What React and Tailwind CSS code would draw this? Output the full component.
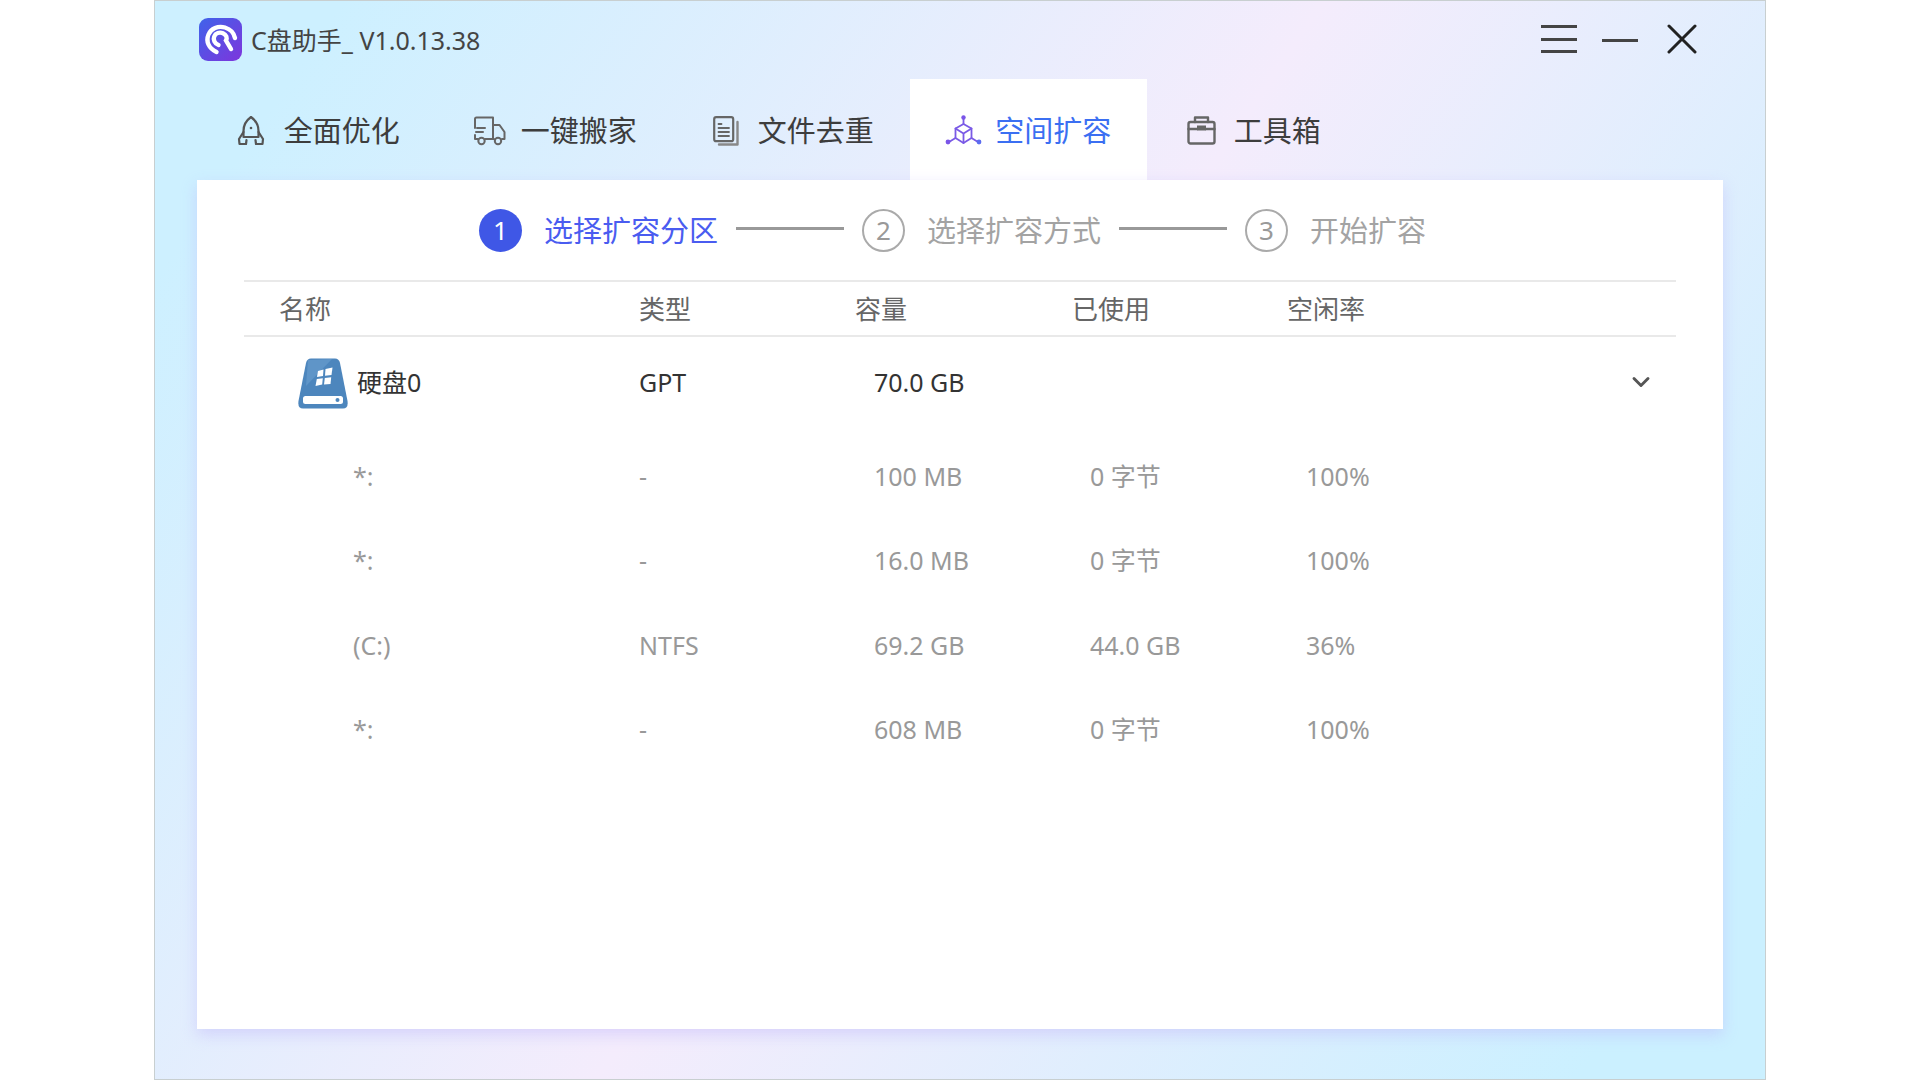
import { ChevronDown } from 'lucide-react';

const FONT = "font-['Noto_Sans','Noto_Sans_CJK_SC',sans-serif]";

const LogoIcon = () => (
  <svg width="43" height="43" viewBox="0 0 43 43" className="shrink-0">
    <defs>
      <linearGradient id="logoBg" x1="0" y1="0" x2="1" y2="1">
        <stop offset="0" stopColor="#3f63ea" />
        <stop offset="1" stopColor="#7e35dc" />
      </linearGradient>
    </defs>
    <rect width="43" height="43" rx="9" fill="url(#logoBg)" />
    <g fill="none" stroke="#fff" strokeLinecap="round">
      <path d="M17.500 34 C10 30.500 6.500 23.500 9.500 16.500 C12 10.500 19 7.500 26 9.500 C31.500 11.200 35 15 36 20" strokeWidth="4.400" />
      <path d="M19.500 27 C15.500 25.500 14 21.500 15.200 18.500 C16.500 15 20.500 13.800 24 15.200 C27.500 16.800 28.500 20 27 22.500 L32 31" strokeWidth="4.400" />
    </g>
  </svg>
);

const RocketIcon = () => (
  <svg width="28" height="32" viewBox="0 0 28 32" fill="none" stroke="#555" strokeWidth="2.200" strokeLinejoin="round" strokeLinecap="round" className="shrink-0">
    <path d="M14 2 C8.500 6 6.500 11 6.500 16 L6.500 22 L21.500 22 L21.500 16 C21.500 11 19.500 6 14 2 Z" />
    <path d="M6.500 17 L2 24 L2.500 29 L9 29 L9.500 25" />
    <path d="M21.500 17 L26 24 L25.500 29 L19 29 L18.500 25" />
    <circle cx="14" cy="13" r="1.300" fill="#555" stroke="none" />
  </svg>
);

const TruckIcon = () => (
  <svg width="33" height="30" viewBox="0 0 33 30" fill="none" stroke="#666" strokeWidth="2" strokeLinejoin="round" strokeLinecap="round" className="shrink-0">
    <path d="M2 12 L2 3 Q2 1.500 3.500 1.500 L20 1.500 L20 23" />
    <path d="M20 9 L26.500 9 L31.500 16 L31.500 23 L29 23" />
    <path d="M2 19 L2 23 L5 23" />
    <path d="M12 23 L21 23" />
    <path d="M4 12 L12 12 M3 16 L10 16" />
    <circle cx="8.500" cy="25" r="3.200" />
    <circle cx="25" cy="25" r="3.200" />
  </svg>
);

const DocIcon = () => (
  <svg width="26" height="30" viewBox="0 0 26 30" fill="none" strokeLinejoin="round" strokeLinecap="round" className="shrink-0">
    <path d="M6 28.500 L24.500 28.500 L24.500 6" stroke="#888" strokeWidth="2.400" />
    <rect x="1.200" y="1.200" width="19" height="24" rx="2" stroke="#666" strokeWidth="2.200" />
    <path d="M5.500 8 L8.500 8 M5.500 12 L16 12 M5.500 16 L16 16 M5.500 20 L16 20" stroke="#666" strokeWidth="1.800" />
  </svg>
);

const CubeIcon = () => (
  <svg width="37" height="31" viewBox="0 0 37 31" fill="none" strokeLinejoin="round" strokeLinecap="round" className="shrink-0">
    <g stroke="#7a5ae6" strokeWidth="1.800">
      <path d="M18.500 9 L26.500 13.500 L26.500 23 L18.500 28 L10.500 23 L10.500 13.500 Z" />
      <path d="M10.500 13.500 L18.500 18.500 L26.500 13.500 M18.500 18.500 L18.500 28" />
      <path d="M18.500 3 L18.500 9 M10.500 23 L4 27 M26.500 23 L33 27" />
    </g>
    <circle cx="18.500" cy="2.500" r="2.200" fill="#7a55e8" />
    <circle cx="3" cy="27" r="2.400" fill="#7a55e8" />
    <circle cx="34" cy="27" r="2.400" fill="#5b6cf0" />
  </svg>
);

const ToolboxIcon = () => (
  <svg width="29" height="29" viewBox="0 0 29 29" fill="none" stroke="#666" strokeWidth="2.400" strokeLinejoin="round" strokeLinecap="round" className="shrink-0">
    <rect x="1.500" y="6" width="26" height="21.500" rx="2" />
    <path d="M8 6 L8 1.500 L21 1.500 L21 6" />
    <path d="M1.500 13 L10 13 M19 13 L27.500 13" />
    <rect x="10" y="9.500" width="9" height="5" fill="#666" stroke="none" />
  </svg>
);

const DiskIcon = () => (
  <svg width="50" height="51" viewBox="0 0 50 51" className="shrink-0">
    <path d="M8 5 Q9 0.500 13 0.500 L37 0.500 Q41 0.500 42 5 L49.500 43 Q50.500 50.500 45 50.500 L5 50.500 Q-0.500 50.500 0.500 43 Z" fill="#4d86bd" />
    <path d="M10 2 L34 1 L8 28 Z" fill="#5f95c8" />
    <g fill="#fff" transform="translate(1 3.500)">
      <path d="M19 9.500 L24.500 8 L24 14.500 L18 15.500 Z" />
      <path d="M26.500 7.500 L33.500 6 L32.500 13.500 L26 14.200 Z" />
      <path d="M17.800 17.500 L23.800 16.800 L23.200 23 L16.500 24.500 Z" />
      <path d="M25.800 16.500 L32.200 15.800 L31.500 22.500 L25 23 Z" />
    </g>
    <rect x="5" y="38" width="40" height="8" rx="2.500" fill="#fff" />
    <circle cx="39.500" cy="42" r="2" fill="#4d86bd" />
  </svg>
);

const tabs = [
  { label: '全面优化', icon: <RocketIcon />, cls: 'gap-[19px] pl-[5px]' },
  { label: '一键搬家', icon: <TruckIcon />, cls: 'gap-[15px] pl-[3px]' },
  { label: '文件去重', icon: <DocIcon />, cls: 'gap-[19px] pl-[5px]' },
  { label: '空间扩容', icon: <CubeIcon />, cls: 'gap-[13px]', active: true },
  { label: '工具箱', icon: <ToolboxIcon />, cls: 'gap-[18px] pr-[24px]' },
];

const partitions = [
  { name: '*:', type: '-', size: '100 MB', used: '0 字节', free: '100%' },
  { name: '*:', type: '-', size: '16.0 MB', used: '0 字节', free: '100%' },
  { name: '(C:)', type: 'NTFS', size: '69.2 GB', used: '44.0 GB', free: '36%' },
  { name: '*:', type: '-', size: '608 MB', used: '0 字节', free: '100%' },
];

const COLS = 'grid grid-cols-[395px_216px_217px_215px_1fr] items-center';

function Step({ n, label, active }) {
  return (
    <div className="flex items-center gap-[22px]">
      <div
        className={
          active
            ? 'flex h-[43px] w-[43px] items-center justify-center rounded-full bg-[#3f57e6] text-[26px] text-white'
            : 'flex h-[43px] w-[43px] items-center justify-center rounded-full border-2 border-[#aaa] text-[26px] text-[#999]'
        }
      >
        {n}
      </div>
      <span className={active ? 'mt-[2px] text-[29px] text-[#4a5cf0]' : 'mt-[2px] text-[29px] text-[#a3a3a3]'}>{label}</span>
    </div>
  );
}

const StepLine = () => <div className="mx-[18px] mb-[4px] h-[3px] w-[108px] bg-[#999]" />;

export default function App() {
  return (
    <div className={`h-[1080px] w-[1920px] overflow-hidden bg-white ${FONT}`}>
      <div className="mx-auto flex h-[1080px] w-[1612px] flex-col border border-[#c8cfd0] bg-[linear-gradient(124deg,#cdf0ff_8%,#f4ecfc_50%,#cbf0ff_92%)]">
        {/* title bar */}
        <div className="flex h-[78px] items-start justify-between pl-[44px] pr-[68px]">
          <div className="mt-[17px] flex items-center gap-[9px]">
            <LogoIcon />
            <span className="mt-[3px] text-[25px] text-[#444]">C盘助手_ V1.0.13.38</span>
          </div>
          <div className="mt-[23px] flex items-center gap-[25px]">
            <div className="flex h-[30px] w-[36px] flex-col justify-between py-[1px]">
              <div className="h-[3px] bg-[#444]" />
              <div className="h-[3px] bg-[#444]" />
              <div className="h-[3px] bg-[#444]" />
            </div>
            <div className="mt-[2px] h-[3px] w-[36px] bg-[#444]" />
            <svg width="30" height="30" viewBox="0 0 30 30" stroke="#222" strokeWidth="3" strokeLinecap="round" className="ml-[4px]">
              <path d="M2 2 L28 28 M28 2 L2 28" />
            </svg>
          </div>
        </div>

        {/* tabs */}
        <div className="flex h-[101px] pl-[42px]">
          {tabs.map((t) => (
            <div
              key={t.label}
              className={`flex h-full w-[237.5px] items-center justify-center pt-[2px] ${t.cls} ${t.active ? 'bg-white text-[#3b6ff2]' : 'text-[#3d3d3d]'}`}
            >
              {t.icon}
              <span className="text-[29px]">{t.label}</span>
            </div>
          ))}
        </div>

        {/* content */}
        <div className="ml-[42px] h-[849px] w-[1526px] bg-white shadow-[0_6px_14px_rgba(190,180,250,0.45)]">
          <div className="flex h-[100px] items-center pl-[282px]">
            <Step n="1" label="选择扩容分区" active />
            <StepLine />
            <Step n="2" label="选择扩容方式" />
            <StepLine />
            <Step n="3" label="开始扩容" />
          </div>

          <div className="mx-[47px]">
            <div className={`${COLS} h-[57px] border-y-2 border-[#e9e9e9] pt-[2px] text-[26px] text-[#666]`}>
              <span className="pl-[35px]">名称</span>
              <span>类型</span>
              <span>容量</span>
              <span>已使用</span>
              <span>空闲率</span>
            </div>

            <div className={`${COLS} relative mt-[20px] h-[52px] text-[25px] text-[#333]`}>
              <div className="flex items-center gap-[9px] pl-[54px]">
                <DiskIcon />
                <span>硬盘0</span>
              </div>
              <span>GPT</span>
              <span className="pl-[19px]">70.0 GB</span>
              <ChevronDown size={28} strokeWidth={2.5} color="#555" className="absolute right-[21px] top-[11px]" />
            </div>

            <div className="mt-[25px] flex flex-col">
              {partitions.map((p, i) => (
                <div key={i} className={`${COLS} h-[84.6px] text-[25px] text-[#999]`}>
                  <span className="pl-[109px]">{p.name}</span>
                  <span>{p.type}</span>
                  <span className="pl-[19px]">{p.size}</span>
                  <span className="pl-[18px]">{p.used}</span>
                  <span className="pl-[19px]">{p.free}</span>
                </div>
              ))}
            </div>
          </div>
        </div>
      </div>
    </div>
  );
}
